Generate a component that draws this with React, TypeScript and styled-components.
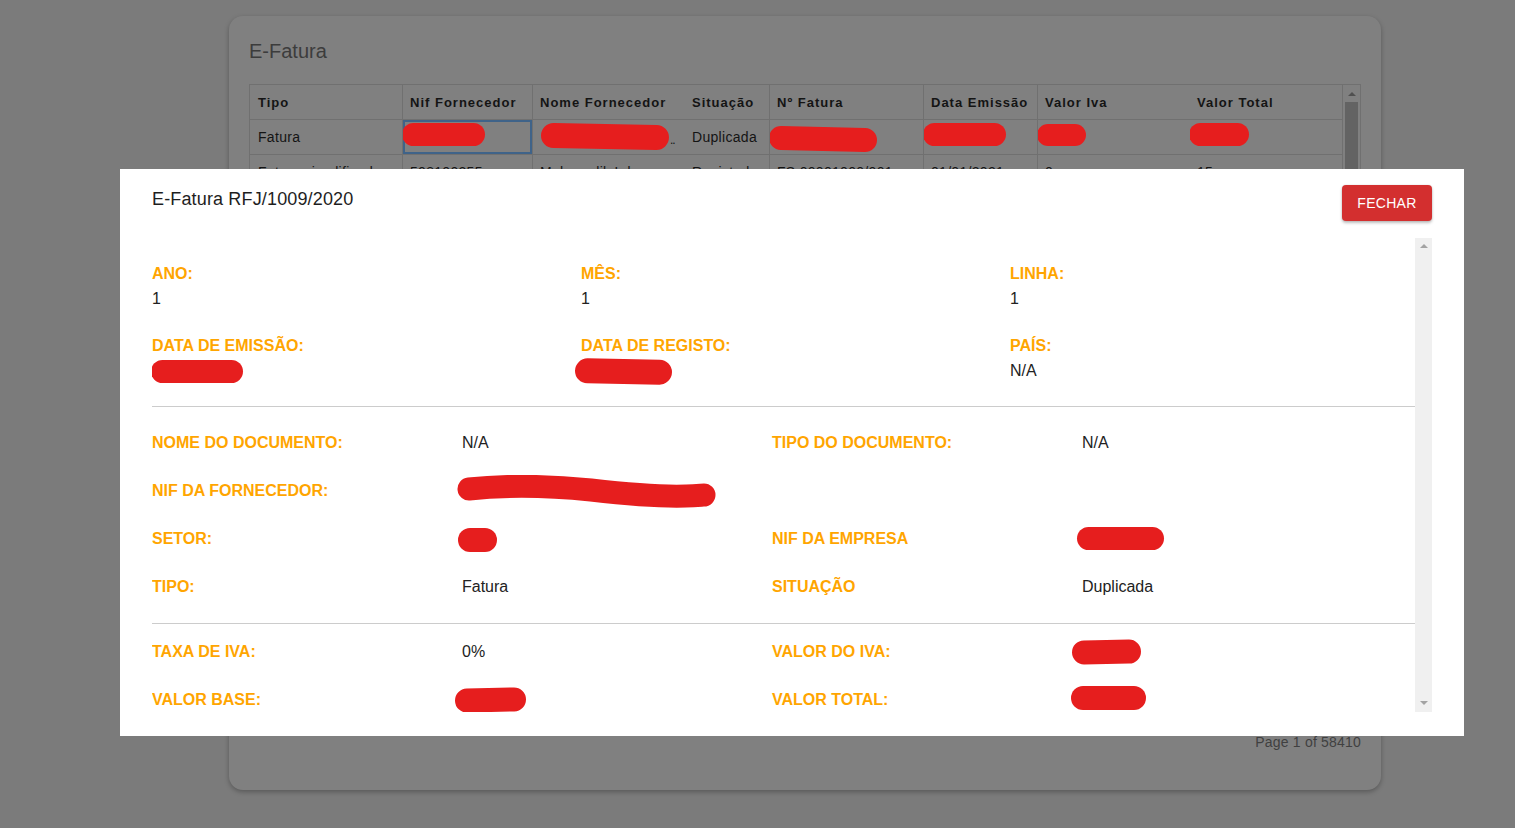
import React from "react";
import styled, { createGlobalStyle } from "styled-components";

const GlobalStyle = createGlobalStyle`
  html, body { margin: 0; padding: 0; }
  body {
    background: #7b7b7b;
    font-family: "Liberation Sans", Arial, sans-serif;
    width: 1515px;
    height: 828px;
    overflow: hidden;
  }
`;

/* ---------- dimmed page behind the dialog ---------- */

const Page = styled.div`
  padding: 16px 0 0 229px;
  height: 828px;
  box-sizing: border-box;
`;

const Card = styled.section`
  width: 1152px;
  height: 774px;
  box-sizing: border-box;
  background: #808080;
  border-radius: 14px;
  box-shadow: 0 2px 5px rgba(0, 0, 0, 0.28);
  padding: 22px 20px 40px;
  display: flex;
  flex-direction: column;
`;

const CardTitle = styled.h2`
  margin: 1px 0 21px 0;
  font-size: 20px;
  line-height: 24px;
  font-weight: normal;
  color: #3c3c3c;
`;

const TableFrame = styled.div`
  display: flex;
  height: 644px;
  border: 1px solid #707070;
  box-sizing: border-box;
  overflow: hidden;
`;

const TableBody = styled.div`
  width: 1092px;
  display: flex;
  flex-direction: column;
`;

const COLS = "152px 130px 152px 85px 154px 114px 152px 153px";

const Row = styled.div<{ $head?: boolean }>`
  display: grid;
  grid-template-columns: ${COLS};
  height: 35px;
  flex: none;
  box-sizing: border-box;
  border-bottom: 1px solid #707070;
  color: #141414;
  font-size: ${(p) => (p.$head ? "13px" : "14px")};
  font-weight: ${(p) => (p.$head ? "bold" : "normal")};
  letter-spacing: ${(p) => (p.$head ? "1px" : "0.3px")};
`;

const Cell = styled.div<{ $sep?: boolean; $focus?: boolean }>`
  display: flex;
  align-items: center;
  box-sizing: border-box;
  padding: 0 6px 0 7px;
  border-left: 1px solid ${(p) => (p.$sep ? "#707070" : "transparent")};
  white-space: nowrap;
  overflow: hidden;
  box-shadow: ${(p) => (p.$focus ? "inset 0 0 0 2px #3f6389" : "none")};
`;

const Ellipsis = styled.span`
  margin-left: 1px;
  align-self: flex-end;
  margin-bottom: 7px;
  font-size: 12px;
  letter-spacing: -1px;
  color: #141414;
`;

const TableScroll = styled.div`
  width: 18px;
  box-sizing: border-box;
  border-left: 1px solid #707070;
  display: flex;
  flex-direction: column;
  align-items: center;
  padding-top: 7px;
`;

const ArrowUp = styled.span<{ $color: string }>`
  width: 0;
  height: 0;
  border-left: 4px solid transparent;
  border-right: 4px solid transparent;
  border-bottom: 4px solid ${(p) => p.$color};
`;

const ArrowDown = styled.span<{ $color: string }>`
  width: 0;
  height: 0;
  border-left: 4px solid transparent;
  border-right: 4px solid transparent;
  border-top: 4px solid ${(p) => p.$color};
`;

const Thumb = styled.div`
  margin-top: 6px;
  width: 13px;
  flex: 1;
  background: #636363;
`;

const Pagination = styled.div`
  margin-top: 6px;
  text-align: right;
  font-size: 14px;
  line-height: 16px;
  color: #404040;
  letter-spacing: 0.2px;
`;

/* ---------- redaction marks (drawn over the screenshot) ---------- */

const Blot = styled.span<{ $w: number; $h: number; $dx?: number; $dy?: number; $r?: number }>`
  display: inline-block;
  flex: none;
  width: ${(p) => p.$w}px;
  height: ${(p) => p.$h}px;
  margin-left: ${(p) => p.$dx ?? 0}px;
  border-radius: ${(p) => p.$h / 2}px;
  background: #e61e1e;
  transform: translateY(${(p) => p.$dy ?? 0}px) rotate(${(p) => p.$r ?? 0}deg);
`;

const ScribbleSvg = styled.svg<{ $dx?: number; $dy?: number }>`
  display: block;
  flex: none;
  margin-left: ${(p) => p.$dx ?? 0}px;
  transform: translateY(${(p) => p.$dy ?? 0}px);
`;

/* ---------- dialog ---------- */

const Overlay = styled.div`
  position: fixed;
  inset: 0;
  padding: 169px 0 0 120px;
  box-sizing: border-box;
`;

const Dialog = styled.div`
  width: 1344px;
  height: 567px;
  background: #fff;
  padding: 16px 32px 24px;
  box-sizing: border-box;
  display: flex;
  flex-direction: column;
`;

const DialogHeader = styled.header`
  display: flex;
  justify-content: space-between;
  align-items: flex-start;
  height: 36px;
  margin-bottom: 17px;
  flex: none;
`;

const DialogTitle = styled.h3`
  margin: 3px 0 0;
  font-size: 18px;
  line-height: 22px;
  font-weight: normal;
  color: #1e1e1e;
  letter-spacing: 0.15px;
`;

const CloseButton = styled.button`
  width: 90px;
  height: 36px;
  border: none;
  border-radius: 4px;
  background: #d32f2f;
  color: #fff;
  font-family: "Liberation Sans", Arial, sans-serif;
  font-size: 14px;
  letter-spacing: 0.3px;
  text-transform: uppercase;
  box-shadow: 0 2px 3px rgba(0, 0, 0, 0.25), 0 0 2px rgba(0, 0, 0, 0.12);
  cursor: pointer;
`;

const DialogBody = styled.div`
  flex: 1;
  display: flex;
  min-height: 0;
`;

const Details = styled.div`
  flex: 1;
  overflow: hidden;
`;

const ScrollTrack = styled.div`
  width: 17px;
  background: #f0f0f0;
  display: flex;
  flex-direction: column;
  justify-content: space-between;
  align-items: center;
  padding: 6px 0 7px;
  box-sizing: border-box;
`;

const TopGrid = styled.div`
  display: grid;
  grid-template-columns: 429px 429px 1fr;
  row-gap: 23px;
  padding: 24px 0 23px;
`;

const Field = styled.div`
  display: flex;
  flex-direction: column;
  gap: 1px;
`;

const Label = styled.span`
  color: #ffa500;
  font-size: 16px;
  line-height: 24px;
  font-weight: bold;
  text-transform: uppercase;
  white-space: nowrap;
`;

const Value = styled.span`
  display: flex;
  align-items: center;
  height: 24px;
  color: #222;
  font-size: 16px;
  line-height: 24px;
  white-space: nowrap;
`;

const Divider = styled.hr`
  margin: 0;
  border: none;
  height: 1px;
  background: #cccccc;
`;

const PairGrid = styled.div<{ $pt: number; $pb: number }>`
  display: grid;
  grid-template-columns: 310px 310px 310px 1fr;
  grid-auto-rows: 48px;
  align-items: center;
  padding: ${(p) => p.$pt}px 0 ${(p) => p.$pb}px;
`;

/* ---------- data ---------- */

const headers: { label: string; sep: boolean }[] = [
  { label: "Tipo", sep: false },
  { label: "Nif Fornecedor", sep: true },
  { label: "Nome Fornecedor", sep: true },
  { label: "Situação", sep: false },
  { label: "Nº Fatura", sep: true },
  { label: "Data Emissão", sep: true },
  { label: "Valor Iva", sep: true },
  { label: "Valor Total", sep: false },
];

const filler: string[][] = [
  ["Fatura simplificada", "508100255", "Mahamalik Lda", "Registada", "FS 00001000/001", "01/01/2021", "0", "15"],
];

const Scribble: React.FC = () => (
  <ScribbleSvg width={262} height={36} viewBox="0 0 262 36" $dx={-6} $dy={2}>
    <path
      d="M13,14 C50,10 95,11 135,15 C170,19 200,22 230,21 C240,21 246,20 248,20"
      fill="none"
      stroke="#e61e1e"
      strokeWidth={23}
      strokeLinecap="round"
    />
  </ScribbleSvg>
);

export default function App() {
  return (
    <>
      <GlobalStyle />
      <Page>
        <Card>
          <CardTitle>E-Fatura</CardTitle>
          <TableFrame>
            <TableBody>
              <Row $head>
                {headers.map((h) => (
                  <Cell key={h.label} $sep={h.sep}>
                    {h.label}
                  </Cell>
                ))}
              </Row>
              <Row>
                <Cell>Fatura</Cell>
                <Cell $sep $focus>
                  <Blot $w={83} $h={23} $dx={-8} $dy={-3} />
                </Cell>
                <Cell $sep>
                  <Blot $w={128} $h={25} $dx={1} $dy={-1} $r={1} />
                  <Ellipsis>..</Ellipsis>
                </Cell>
                <Cell>Duplicada</Cell>
                <Cell $sep>
                  <Blot $w={108} $h={24} $dx={-8} $dy={2} $r={1.5} />
                </Cell>
                <Cell $sep>
                  <Blot $w={83} $h={23} $dx={-8} $dy={-3} />
                </Cell>
                <Cell $sep>
                  <Blot $w={49} $h={22} $dx={-8} $dy={-2} />
                </Cell>
                <Cell>
                  <Blot $w={60} $h={23} $dx={-8} $dy={-3} />
                </Cell>
              </Row>
              {filler.map((r, i) => (
                <Row key={i}>
                  {r.map((v, j) => (
                    <Cell key={j} $sep={headers[j].sep}>
                      {v}
                    </Cell>
                  ))}
                </Row>
              ))}
            </TableBody>
            <TableScroll>
              <ArrowUp $color="#505050" />
              <Thumb />
            </TableScroll>
          </TableFrame>
          <Pagination>Page 1 of 58410</Pagination>
        </Card>
      </Page>

      <Overlay>
        <Dialog>
          <DialogHeader>
            <DialogTitle>E-Fatura RFJ/1009/2020</DialogTitle>
            <CloseButton>Fechar</CloseButton>
          </DialogHeader>
          <DialogBody>
            <Details>
              <TopGrid>
                <Field>
                  <Label>Ano:</Label>
                  <Value>1</Value>
                </Field>
                <Field>
                  <Label>Mês:</Label>
                  <Value>1</Value>
                </Field>
                <Field>
                  <Label>Linha:</Label>
                  <Value>1</Value>
                </Field>
                <Field>
                  <Label>Data de Emissão:</Label>
                  <Value>
                    <Blot $w={92} $h={23} $dx={-1} $dy={0} />
                  </Value>
                </Field>
                <Field>
                  <Label>Data de Registo:</Label>
                  <Value>
                    <Blot $w={97} $h={25} $dx={-6} $dy={0} $r={1} />
                  </Value>
                </Field>
                <Field>
                  <Label>País:</Label>
                  <Value>N/A</Value>
                </Field>
              </TopGrid>
              <Divider />
              <PairGrid $pt={12} $pb={12}>
                <Label>Nome do Documento:</Label>
                <Value>N/A</Value>
                <Label>Tipo do Documento:</Label>
                <Value>N/A</Value>

                <Label>NIF da Fornecedor:</Label>
                <Value>
                  <Scribble />
                </Value>
                <span />
                <span />

                <Label>Setor:</Label>
                <Value>
                  <Blot $w={39} $h={24} $dx={-4} $dy={1} />
                </Value>
                <Label>NIF da Empresa</Label>
                <Value>
                  <Blot $w={87} $h={23} $dx={-5} $dy={-1} />
                </Value>

                <Label>Tipo:</Label>
                <Value>Fatura</Value>
                <Label>Situação</Label>
                <Value>Duplicada</Value>
              </PairGrid>
              <Divider />
              <PairGrid $pt={4} $pb={0}>
                <Label>Taxa de IVA:</Label>
                <Value>0%</Value>
                <Label>Valor do IVA:</Label>
                <Value>
                  <Blot $w={69} $h={24} $dx={-10} $dy={0} $r={-1} />
                </Value>

                <Label>Valor Base:</Label>
                <Value>
                  <Blot $w={71} $h={24} $dx={-7} $dy={0} $r={-1.5} />
                </Value>
                <Label>Valor Total:</Label>
                <Value>
                  <Blot $w={75} $h={24} $dx={-11} $dy={-2} />
                </Value>
              </PairGrid>
            </Details>
            <ScrollTrack>
              <ArrowUp $color="#a3a3a3" />
              <ArrowDown $color="#a3a3a3" />
            </ScrollTrack>
          </DialogBody>
        </Dialog>
      </Overlay>
    </>
  );
}
